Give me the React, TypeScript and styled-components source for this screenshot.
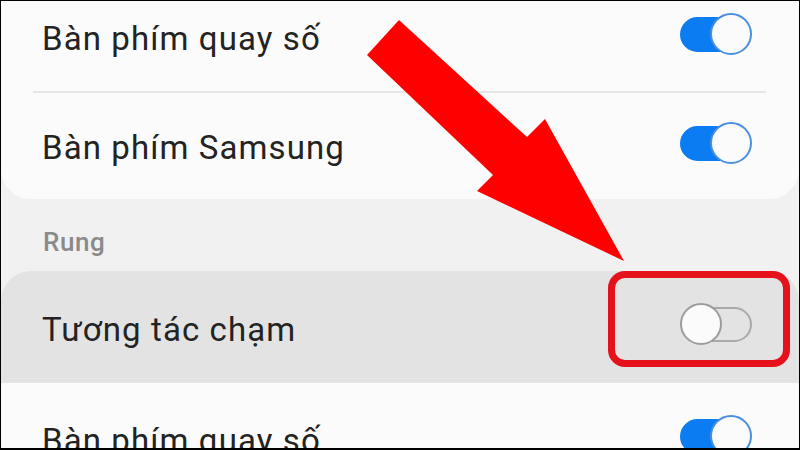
import React from "react";
import styled, { createGlobalStyle } from "styled-components";

const Global = createGlobalStyle`
  html, body { margin: 0; padding: 0; background: #000; }
  * { box-sizing: border-box; }
`;

const Frame = styled.div`
  position: relative;
  width: 800px;
  height: 450px;
  border: 1px solid #000;
  border-bottom-width: 2px;
  background: #f1f1f1;
  overflow: hidden;
  font-family: Roboto, "Noto Sans", "Liberation Sans", sans-serif;
`;

const Card = styled.div<{ $top?: boolean }>`
  background: #fbfbfb;
  margin-top: ${(p) => (p.$top ? "-20px" : "0")};
  border-radius: ${(p) => (p.$top ? "0 0 30px 30px" : "30px 30px 0 0")};
  overflow: hidden;
  display: flex;
  flex-direction: column;
`;

const Row = styled.div<{ $height: number; $pressed?: boolean; $divider?: boolean }>`
  position: relative;
  height: ${(p) => p.$height}px;
  display: flex;
  align-items: center;
  justify-content: space-between;
  padding: 0 47px 0 41px;
  background: ${(p) => (p.$pressed ? "#e3e3e3" : "transparent")};
  &::before {
    content: "";
    display: ${(p) => (p.$divider ? "block" : "none")};
    position: absolute;
    top: 0;
    left: 32px;
    right: 33px;
    height: 2px;
    background: #e6e6e6;
  }
`;

const Label = styled.span`
  font-size: 33px;
  color: #232323;
  letter-spacing: 1.1px;
  margin-top: 4px;
`;

const SectionHeader = styled.div`
  height: 72px;
  display: flex;
  align-items: center;
  padding: 14px 0 0 42px;
  font-size: 26px;
  font-weight: 500;
  letter-spacing: 0.6px;
  color: #8a8a8a;
`;

const Switch = styled.div<{ $on: boolean }>`
  position: relative;
  width: 72px;
  height: 42px;
  margin-top: ${(p) => (p.$on ? "-4px" : "-6px")};
`;

const Track = styled.div<{ $on: boolean }>`
  position: absolute;
  top: 4px;
  left: ${(p) => (p.$on ? "0" : "8px")};
  width: 64px;
  height: 35px;
  border-radius: 18px;
  background: ${(p) => (p.$on ? "#0b7cf2" : "transparent")};
  border: 2px solid ${(p) => (p.$on ? "#0b7cf2" : "#a9a9a9")};
`;

const Knob = styled.div<{ $on: boolean }>`
  position: absolute;
  top: 0;
  ${(p) => (p.$on ? "right: 0;" : "left: 0;")}
  width: 42px;
  height: 42px;
  border-radius: 50%;
  background: #fbfbfb;
  border: 2px solid ${(p) => (p.$on ? "#4a8fdf" : "#9c9c9c")};
`;

const Highlight = styled.div`
  position: absolute;
  left: 607px;
  top: 270px;
  width: 182px;
  height: 96px;
  border: 7px solid #e5121b;
  border-radius: 17px;
  pointer-events: none;
`;

const ArrowSvg = styled.svg`
  position: absolute;
  left: -1px;
  top: -1px;
  width: 800px;
  height: 450px;
  pointer-events: none;
`;

const Toggle = ({ on }: { on: boolean }) => (
  <Switch $on={on}>
    <Track $on={on} />
    <Knob $on={on} />
  </Switch>
);

export default function App() {
  return (
    <>
      <Global />
      <Frame>
        <Card $top>
          <Row $height={110}>
            <Label>Bàn phím quay số</Label>
            <Toggle on />
          </Row>
          <Row $height={108} $divider>
            <Label>Bàn phím Samsung</Label>
            <Toggle on />
          </Row>
        </Card>
        <SectionHeader>Rung</SectionHeader>
        <Card>
          <Row $height={112} $pressed>
            <Label>Tương tác chạm</Label>
            <Toggle on={false} />
          </Row>
          <Row $height={110}>
            <Label>Bàn phím quay số</Label>
            <Toggle on />
          </Row>
        </Card>
        <Highlight />
        <ArrowSvg viewBox="0 0 800 450">
          <polygon
            points="399,20 527,137 545,119 624,261 477,191 493,175 367,55"
            fill="#ff0000"
          />
        </ArrowSvg>
      </Frame>
    </>
  );
}
